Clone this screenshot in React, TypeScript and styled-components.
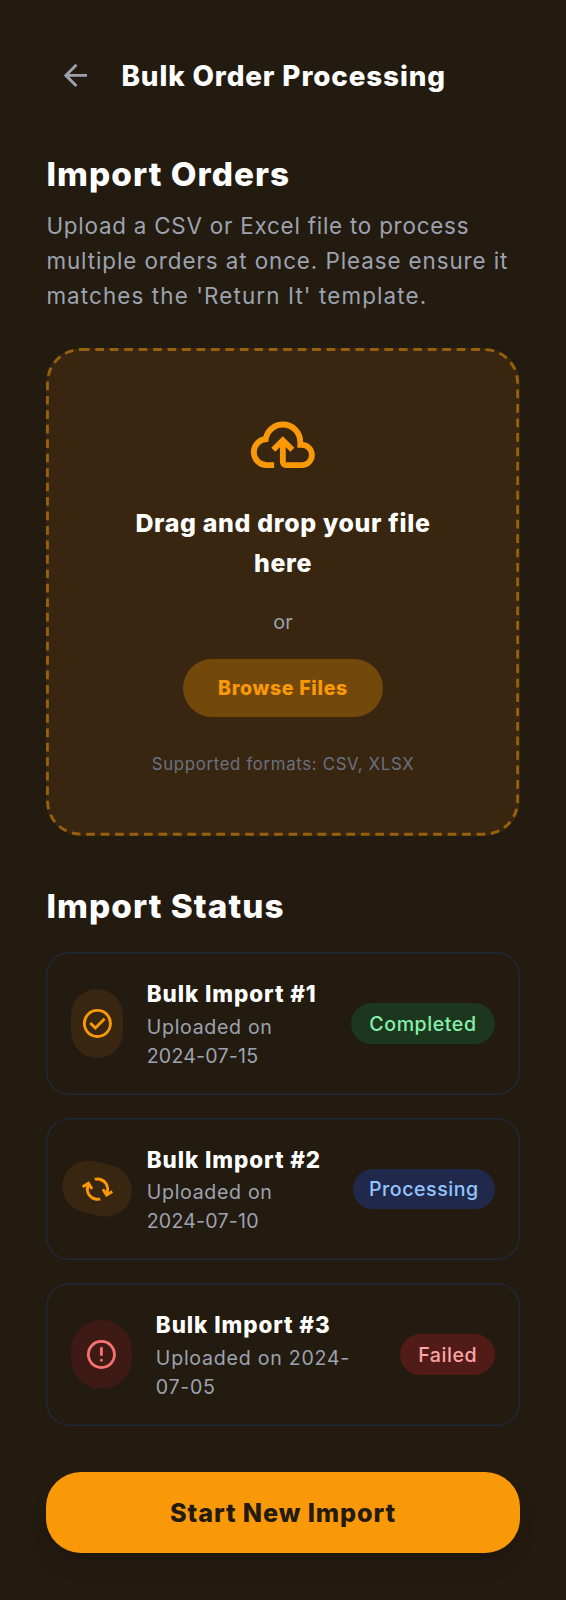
import React from "react";
import styled, { createGlobalStyle } from "styled-components";

const primary = "#fa9907";

const GlobalStyle = createGlobalStyle`
  *, *::before, *::after { box-sizing: border-box; }
  body { margin: 0; background: #231a10; }
`;

const Page = styled.div`
  width: 100%;
  max-width: 566px;
  height: 1600px;
  padding: 55.2px 46.4px 0;
  display: flex;
  flex-direction: column;
  background: #231a10;
  color: #fff;
  font-family: "Inter", "Liberation Sans", sans-serif;
  overflow: hidden;
`;

const Icon = styled.svg<{ $size?: number }>`
  display: block;
  flex: none;
  width: ${(p) => p.$size ?? 34.8}px;
  height: ${(p) => p.$size ?? 34.8}px;
  fill: currentColor;
`;

const Header = styled.header`
  display: flex;
  align-items: center;
  gap: 28.6px;
  height: 40.6px;
  padding-left: 11.7px;
`;

const BackButton = styled.button`
  padding: 0;
  border: 0;
  background: none;
  color: #9ca3af;
`;

const Title = styled.h1`
  margin: 2px 0 0;
  font-size: 27.8px;
  line-height: 40.6px;
  font-weight: 800;
  letter-spacing: 0.032em;
  white-space: nowrap;
`;

const SectionTitle = styled.h2<{ $top: number }>`
  margin: ${(p) => p.$top}px 0 0;
  font-size: 33.3px;
  line-height: 46.4px;
  font-weight: 800;
  letter-spacing: 0.032em;
  white-space: nowrap;
`;

const Intro = styled.p`
  margin: 12.2px 0 34.8px;
  font-size: 22.4px;
  line-height: 34.83px;
  color: #9ca3af;
  white-space: nowrap;
`;

const TextLine = styled.span<{ $tracking: number }>`
  display: block;
  letter-spacing: ${(p) => p.$tracking}em;
`;

const DropZone = styled.div`
  position: relative;
  height: 488px;
  padding-top: 61.4px;
  display: flex;
  flex-direction: column;
  align-items: center;
  text-align: center;
  border-radius: 34.8px;
  background: #382610;

  &::before {
    content: "";
    position: absolute;
    top: 0;
    left: 0;
    width: calc(100% / 1.4513);
    height: calc(100% / 1.4513);
    border: 2px dashed #99600b;
    border-radius: 24px;
    transform: scale(1.4513);
    transform-origin: 0 0;
    pointer-events: none;
  }
`;

const CloudIcon = styled(Icon)`
  color: ${primary};
`;

const DropTitle = styled.p`
  margin: 23.2px 0;
  font-size: 24.9px;
  line-height: 40.6px;
  font-weight: 800;
  letter-spacing: 0.027em;
  white-space: nowrap;
`;

const DropOr = styled.p`
  margin: 0.6px 0 22.8px;
  font-size: 19.8px;
  line-height: 29px;
  color: #9ca3af;
`;

const BrowseButton = styled.button`
  width: 199.3px;
  height: 58px;
  padding: 0;
  border: 0;
  border-radius: 29px;
  background: #72490b;
  color: ${primary};
  font: 800 19.5px/29px "Inter", "Liberation Sans", sans-serif;
  letter-spacing: 0.035em;
`;

const Formats = styled.p`
  margin: 35.2px 0 0;
  font-size: 16.8px;
  line-height: 23.2px;
  letter-spacing: 0.04em;
  color: #6b7280;
  white-space: nowrap;
`;

const ImportList = styled.div`
  display: flex;
  flex-direction: column;
  gap: 23.2px;
  margin-top: 23.2px;
`;

const ImportCard = styled.article`
  display: flex;
  align-items: center;
  gap: 23.4px;
  height: 142.3px;
  padding: 0 24.65px;
  border-radius: 23.2px;
  box-shadow: inset 0 0 0 1.45px #1f2937;
`;

const StatusIcon = styled.div<{ $width: number; $tone: Tone; $angle?: number }>`
  flex: none;
  display: flex;
  align-items: center;
  justify-content: center;
  width: ${(p) => p.$width}px;
  height: 69.6px;
  border-radius: 999px;
  background: ${(p) => (p.$tone === "failed" ? "#3d1a13" : "#382610")};
  color: ${(p) => (p.$tone === "failed" ? "#f87171" : primary)};
  transform: rotate(${(p) => p.$angle ?? 0}deg);
`;

const CardBody = styled.div`
  flex: 1;
  min-width: 0;
  white-space: nowrap;
`;

const CardTitle = styled.h3`
  margin: 0;
  font-size: 22.4px;
  line-height: 34.8px;
  font-weight: 800;
  letter-spacing: 0.042em;
`;

const CardMeta = styled.p`
  margin: 0.8px 0 -0.8px;
  font-size: 19.6px;
  line-height: 29px;
  color: #9ca3af;
`;

type Tone = "completed" | "processing" | "failed";

const badgeColors: Record<Tone, [string, string]> = {
  completed: ["#1d361e", "#86efac"],
  processing: ["#20294b", "#93c5fd"],
  failed: ["#511b18", "#fca5a5"],
};

const Badge = styled.span<{ $tone: Tone; $width: number }>`
  flex: none;
  width: ${(p) => p.$width}px;
  padding-top: 1.6px;
  border-radius: 21px;
  background: ${(p) => badgeColors[p.$tone][0]};
  color: ${(p) => badgeColors[p.$tone][1]};
  font-size: 19.6px;
  line-height: 39px;
  font-weight: 500;
  letter-spacing: 0.028em;
  text-align: center;
`;

const StartButton = styled.button`
  flex: none;
  height: 81.4px;
  margin-top: 46.4px;
  border: 0;
  border-radius: 34.8px;
  background: ${primary};
  color: #231a10;
  font: 800 25.2px/40px "Inter", "Liberation Sans", sans-serif;
  letter-spacing: 0.035em;
  box-shadow: 0 14.5px 21.8px -4.4px rgba(0, 0, 0, 0.1), 0 5.8px 8.7px -5.8px rgba(0, 0, 0, 0.1);
`;

const ring =
  "M480-80q-83 0-156-31.5T197-197q-54-54-85.5-127T80-480q0-83 31.5-156T197-763q54-54 127-85.5T480-880q83 0 156 31.5T763-763q54 54 85.5 127T880-480q0 83-31.5 156T763-197q-54 54-127 85.5T480-80Zm0-80q134 0 227-93t93-227q0-134-93-227t-227-93q-134 0-227 93t-93 227q0 134 93 227t227 93Z";

const paths = {
  back: "m313-440 224 224-57 56-320-320 320-320 57 56-224 224h487v80H313Z",
  cloud:
    "M260-160q-91 0-155.5-63T40-377q0-78 47-139t123-78q25-92 100-149t170-57q117 0 198.5 81.5T760-520q69 8 114.5 59.5T920-340q0 75-52.5 127.5T740-160H520q-33 0-56.5-23.5T440-240v-206l-64 62-56-56 160-160 160 160-56 56-64-62v206h220q42 0 71-29t29-71q0-42-29-71t-71-29h-60v-80q0-83-58.5-141.5T480-720q-83 0-141.5 58.5T280-520h-20q-58 0-99 41t-41 99q0 58 41 99t99 41h100v80H260Z",
  completed: "m424-296 282-282-56-56-226 226-114-114-56 56 170 170Z" + ring,
  processing:
    "M204-318q-22-38-33-78t-11-82q0-134 93-228t227-94h7l-64-64 56-56 160 160-160 160-56-56 64-64h-7q-100 0-170 70.5T240-478q0 26 6 51t18 49l-60 60ZM481-40 321-200l160-160 56 56-64 64h7q100 0 170-70.5T720-482q0-26-6-51t-18-49l60-60q22 38 33 78t11 82q0 134-93 228t-227 94h-7l64 64-56 56Z",
  failed:
    "M480-280q17 0 28.5-11.5T520-320q0-17-11.5-28.5T480-360q-17 0-28.5 11.5T440-320q0 17 11.5 28.5T480-280Zm-40-160h80v-240h-80v240Z" + ring,
};

const viewBox = "0 -960 960 960";

interface ImportItem {
  title: string;
  meta: [string, number][];
  tone: Tone;
  label: string;
  iconWidth: number;
  badgeWidth: number;
  angle?: number;
}

const imports: ImportItem[] = [
  { title: "Bulk Import #1", meta: [["Uploaded on", 0.034], ["2024-07-15", 0.01]], tone: "completed", label: "Completed", iconWidth: 52.3, badgeWidth: 144 },
  { title: "Bulk Import #2", meta: [["Uploaded on", 0.034], ["2024-07-10", 0.01]], tone: "processing", label: "Processing", iconWidth: 52.3, badgeWidth: 142.3, angle: 103 },
  { title: "Bulk Import #3", meta: [["Uploaded on 2024-", 0.038], ["07-05", 0.034]], tone: "failed", label: "Failed", iconWidth: 61.4, badgeWidth: 94.5 },
];

export default function App() {
  return (
    <Page>
      <GlobalStyle />
      <Header>
        <BackButton aria-label="Back">
          <Icon viewBox={viewBox}><path d={paths.back} /></Icon>
        </BackButton>
        <Title>Bulk Order Processing</Title>
      </Header>

      <SectionTitle $top={54.8}>Import Orders</SectionTitle>
      <Intro>
        <TextLine $tracking={0.0345}>Upload a CSV or Excel file to process</TextLine>
        <TextLine $tracking={0.041}>multiple orders at once. Please ensure it</TextLine>
        <TextLine $tracking={0.05}>matches the 'Return It' template.</TextLine>
      </Intro>

      <DropZone>
        <CloudIcon $size={69.7} viewBox={viewBox}><path d={paths.cloud} /></CloudIcon>
        <DropTitle>Drag and drop your file<br />here</DropTitle>
        <DropOr>or</DropOr>
        <BrowseButton>Browse Files</BrowseButton>
        <Formats>Supported formats: CSV, XLSX</Formats>
      </DropZone>

      <SectionTitle $top={46.4}>Import Status</SectionTitle>
      <ImportList>
        {imports.map((item) => (
          <ImportCard key={item.title}>
            <StatusIcon $width={item.iconWidth} $tone={item.tone} $angle={item.angle}>
              <Icon viewBox={viewBox}><path d={paths[item.tone]} /></Icon>
            </StatusIcon>
            <CardBody>
              <CardTitle>{item.title}</CardTitle>
              <CardMeta>
                {item.meta.map(([text, tracking]) => (
                  <TextLine key={text} $tracking={tracking}>{text}</TextLine>
                ))}
              </CardMeta>
            </CardBody>
            <Badge $tone={item.tone} $width={item.badgeWidth}>{item.label}</Badge>
          </ImportCard>
        ))}
      </ImportList>

      <StartButton>Start New Import</StartButton>
    </Page>
  );
}
